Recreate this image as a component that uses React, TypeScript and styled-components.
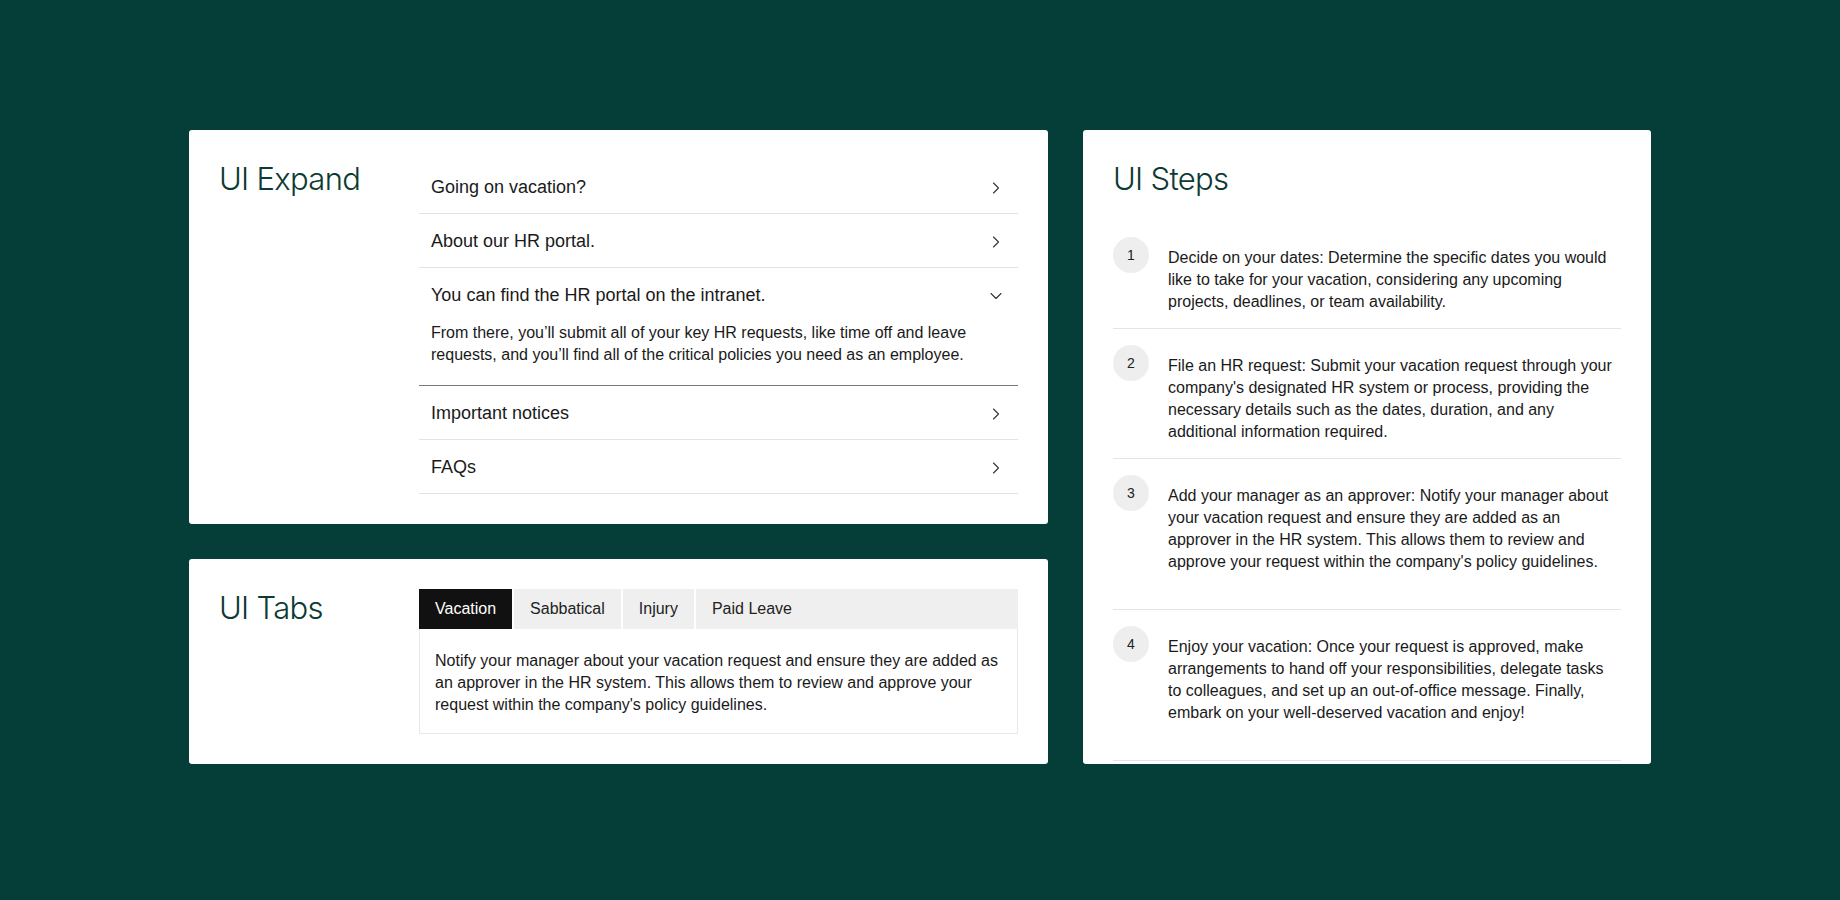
import React, { useState } from 'react';
import styled, { createGlobalStyle } from 'styled-components';
import { ChevronRight, ChevronDown } from 'lucide-react';

const GlobalStyle = createGlobalStyle`
  *, *::before, *::after {
    box-sizing: border-box;
  }
  body {
    margin: 0;
    background: #053d38;
    font-family: "Liberation Sans", Arial, sans-serif;
    color: #1a1a1a;
  }
`;

const Page = styled.main`
  display: flex;
  justify-content: center;
  min-height: 100vh;
  padding-top: 130px;
`;

const Layout = styled.div`
  display: grid;
  grid-template-columns: 859px 568px;
  gap: 35px;
  align-items: stretch;
  align-self: flex-start;
`;

const LeftColumn = styled.div`
  display: flex;
  flex-direction: column;
  gap: 35px;
`;

const Card = styled.section<{ $padBottom?: number }>`
  background: #fff;
  border-radius: 3px;
  padding: 30px 30px ${(p) => p.$padBottom ?? 30}px;
`;

const SplitCard = styled(Card)`
  display: grid;
  grid-template-columns: 200px 1fr;
  align-items: start;
`;

const Title = styled.h2`
  margin: 0;
  font-family: Inter, "Liberation Sans", sans-serif;
  font-size: 31px;
  font-weight: 350;
  line-height: 37px;
  letter-spacing: -0.7px;
  color: #0b3b34;
`;

// accordion
const Accordion = styled.div`
  display: flex;
  flex-direction: column;
`;

const AccordionItem = styled.div<{ $open: boolean }>`
  border-bottom: 1px solid ${(p) => (p.$open ? '#7a7a7a' : '#e3e3e3')};
`;

const AccordionHeader = styled.button`
  display: flex;
  align-items: center;
  justify-content: space-between;
  width: 100%;
  height: 53px;
  padding: 2px 12px 0 12px;
  border: none;
  background: none;
  font-family: inherit;
  font-size: 18px;
  color: #1a1a1a;
  text-align: left;
  cursor: pointer;
  svg {
    color: #333;
    flex-shrink: 0;
  }
`;

const AccordionBody = styled.p`
  margin: 0;
  padding: 1px 16px 19px 12px;
  font-size: 16px;
  line-height: 22px;
`;

// tabs
const TabsWrap = styled.div`
  display: flex;
  flex-direction: column;
`;

const TabList = styled.div`
  display: flex;
  gap: 2px;
`;

const Tab = styled.button<{ $active: boolean }>`
  height: 40px;
  padding: 0 16px;
  border: none;
  font-family: inherit;
  font-size: 16px;
  text-align: left;
  cursor: pointer;
  background: ${(p) => (p.$active ? '#111' : '#efefef')};
  color: ${(p) => (p.$active ? '#fff' : '#222')};
  &:last-child {
    flex: 1;
  }
`;

const TabPanel = styled.p`
  margin: 0;
  padding: 21px 16px 17px 15px;
  border: 1px solid #e8e8e8;
  border-top: none;
  font-size: 16px;
  line-height: 22px;
`;

// steps
const StepsList = styled.ol`
  list-style: none;
  margin: 24px 0 0;
  padding: 0;
`;

const StepItem = styled.li<{ $minHeight?: number }>`
  display: flex;
  align-items: flex-start;
  gap: 19px;
  padding: 16px 0 15px;
  min-height: ${(p) => (p.$minHeight ? `${p.$minHeight}px` : 'auto')};
  border-bottom: 1px solid #e4e4e4;
`;

const StepNumber = styled.span`
  display: flex;
  align-items: center;
  justify-content: center;
  flex-shrink: 0;
  width: 36px;
  height: 36px;
  border-radius: 50%;
  background: #eeeeee;
  font-size: 14px;
  color: #222;
`;

const StepText = styled.p`
  margin: 10px 0 0;
  font-size: 16px;
  line-height: 22px;
`;

const accordionItems = [
  { title: 'Going on vacation?', body: '' },
  { title: 'About our HR portal.', body: '' },
  {
    title: 'You can find the HR portal on the intranet.',
    body: 'From there, you’ll submit all of your key HR requests, like time off and leave requests, and you’ll find all of the critical policies you need as an employee.',
  },
  { title: 'Important notices', body: '' },
  { title: 'FAQs', body: '' },
];

const tabs = ['Vacation', 'Sabbatical', 'Injury', 'Paid Leave'];

const steps = [
  {
    text: 'Decide on your dates: Determine the specific dates you would like to take for your vacation, considering any upcoming projects, deadlines, or team availability.',
  },
  {
    text: "File an HR request: Submit your vacation request through your company's designated HR system or process, providing the necessary details such as the dates, duration, and any additional information required.",
  },
  {
    text: "Add your manager as an approver: Notify your manager about your vacation request and ensure they are added as an approver in the HR system. This allows them to review and approve your request within the company's policy guidelines.",
    minHeight: 151,
  },
  {
    text: 'Enjoy your vacation: Once your request is approved, make arrangements to hand off your responsibilities, delegate tasks to colleagues, and set up an out-of-office message. Finally, embark on your well-deserved vacation and enjoy!',
    minHeight: 151,
  },
];

const App = (): JSX.Element => {
  const [open, setOpen] = useState(2);
  const [activeTab, setActiveTab] = useState(0);

  return (
    <>
      <GlobalStyle />
      <Page>
        <Layout>
          <LeftColumn>
            <SplitCard>
              <Title>UI Expand</Title>
              <Accordion>
                {accordionItems.map((item, i) => (
                  <AccordionItem key={item.title} $open={open === i}>
                    <AccordionHeader onClick={() => setOpen(open === i ? -1 : i)}>
                      {item.title}
                      {open === i ? (
                        <ChevronDown size={20} strokeWidth={1.3} />
                      ) : (
                        <ChevronRight size={20} strokeWidth={1.3} />
                      )}
                    </AccordionHeader>
                    {open === i && item.body && <AccordionBody>{item.body}</AccordionBody>}
                  </AccordionItem>
                ))}
              </Accordion>
            </SplitCard>

            <SplitCard>
              <Title>UI Tabs</Title>
              <TabsWrap>
                <TabList>
                  {tabs.map((t, i) => (
                    <Tab key={t} $active={activeTab === i} onClick={() => setActiveTab(i)}>
                      {t}
                    </Tab>
                  ))}
                </TabList>
                <TabPanel>
                  Notify your manager about your vacation request and ensure they are added as
                  an approver in the HR system. This allows them to review and approve your
                  request within the company's policy guidelines.
                </TabPanel>
              </TabsWrap>
            </SplitCard>
          </LeftColumn>

          <Card $padBottom={0}>
            <Title>UI Steps</Title>
            <StepsList>
              {steps.map((s, i) => (
                <StepItem key={i} $minHeight={s.minHeight}>
                  <StepNumber>{i + 1}</StepNumber>
                  <StepText>{s.text}</StepText>
                </StepItem>
              ))}
            </StepsList>
          </Card>
        </Layout>
      </Page>
    </>
  );
};

export default App;
